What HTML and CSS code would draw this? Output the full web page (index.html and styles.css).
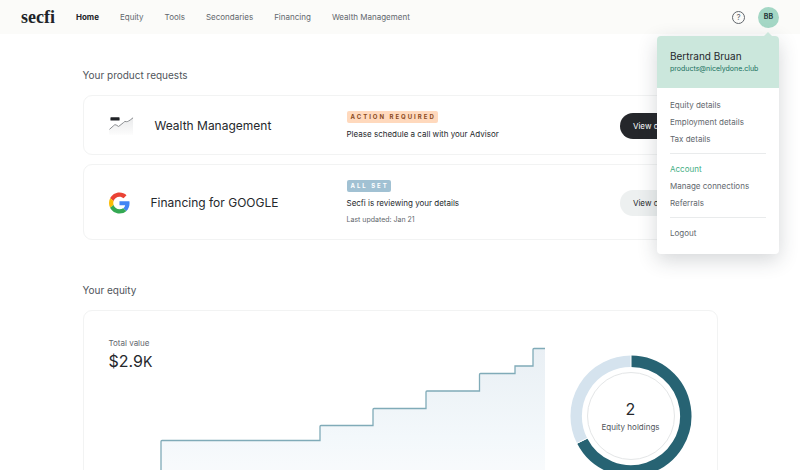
FILE: index.html
```html
<!DOCTYPE html>
<html lang="en">
<head>
<meta charset="utf-8">
<meta name="viewport" content="width=device-width, initial-scale=1">
<title>Secfi</title>
<link rel="stylesheet" href="styles.css">
</head>
<body>
<header class="topbar">
  <a class="logo" href="#">secfi</a>
  <nav class="nav">
    <a class="current" href="#">Home</a>
    <a href="#">Equity</a>
    <a href="#">Tools</a>
    <a href="#">Secondaries</a>
    <a href="#">Financing</a>
    <a href="#">Wealth Management</a>
  </nav>
  <div class="tools">
    <button class="help" type="button">?</button>
    <div class="account">
      <button class="avatar" type="button">BB</button>
      <div class="menu">
        <div class="menu-head">
          <p class="menu-name">Bertrand Bruan</p>
          <a class="menu-mail" href="#">products@nicelydone.club</a>
        </div>
        <div class="menu-body">
          <div class="menu-group">
            <a href="#">Equity details</a>
            <a href="#">Employment details</a>
            <a href="#">Tax details</a>
          </div>
          <div class="menu-group">
            <a class="active" href="#">Account</a>
            <a href="#">Manage connections</a>
            <a href="#">Referrals</a>
          </div>
          <div class="menu-group">
            <a href="#">Logout</a>
          </div>
        </div>
      </div>
    </div>
  </div>
</header>
<main class="page">
  <section class="section">
    <h2>Your product requests</h2>
    <div class="requests">
      <article class="card request">
        <div class="product">
          <svg width="25" height="20" viewBox="0 0 26 20" aria-hidden="true">
            <defs><linearGradient id="spark" x1="0" y1="0" x2="0" y2="1"><stop offset="0" stop-color="#e9eaeb"/><stop offset="1" stop-color="#fcfcfc"/></linearGradient></defs>
            <path d="M0 14 5 9.500 8 9 10 10.500 15 6.500 17 5 20 5.500 25 1V19H0Z" fill="url(#spark)"/>
            <path d="M.5 13.500 5 9.500Q6 8 7.500 9L10 10.500 15 6.500Q16.500 4.500 18 5.500 19.500 6 25 1.500" fill="none" stroke="#85888b"/>
            <rect x="1.500" y="1" width="9.500" height="3.400" rx=".6" fill="#202226"/>
          </svg>
          <h3>Wealth Management</h3>
        </div>
        <div class="status">
          <span class="badge badge-action">ACTION REQUIRED</span>
          <p class="message">Please schedule a call with your Advisor</p>
        </div>
        <button class="btn btn-dark" type="button">View details</button>
      </article>
      <article class="card request">
        <div class="product">
          <svg width="21" height="22" viewBox="0 0 48 48" aria-hidden="true">
            <path fill="#EA4335" d="M24 9.500c3.540 0 6.710 1.220 9.210 3.600l6.850-6.850C35.900 2.380 30.470 0 24 0 14.620 0 6.510 5.380 2.560 13.220l7.980 6.190C12.430 13.720 17.740 9.500 24 9.500z"/>
            <path fill="#4285F4" d="M46.980 24.550c0-1.570-.15-3.090-.38-4.550H24v9.020h12.940c-.58 2.960-2.260 5.480-4.780 7.180l7.730 6c4.510-4.180 7.090-10.360 7.090-17.650z"/>
            <path fill="#FBBC05" d="M10.530 28.590c-.48-1.450-.76-2.990-.76-4.590s.27-3.140.76-4.590l-7.980-6.190C.92 16.460 0 20.120 0 24s.92 7.540 2.560 10.780l7.970-6.190z"/>
            <path fill="#34A853" d="M24 48c6.480 0 11.930-2.130 15.890-5.810l-7.730-6c-2.150 1.450-4.920 2.300-8.160 2.300-6.260 0-11.570-4.220-13.470-9.910l-7.980 6.190C6.510 42.620 14.620 48 24 48z"/>
          </svg>
          <h3>Financing for GOOGLE</h3>
        </div>
        <div class="status">
          <span class="badge badge-set">ALL SET</span>
          <p class="message">Secfi is reviewing your details</p>
          <p class="updated">Last updated: Jan 21</p>
        </div>
        <button class="btn btn-light" type="button">View details</button>
      </article>
    </div>
  </section>
  <section class="section">
    <h2>Your equity</h2>
    <div class="card equity">
      <div class="value">
        <div class="total">
          <p class="total-label">Total value</p>
          <p class="total-amount">$2.9<span>K</span></p>
        </div>
        <svg class="steps" viewBox="0 0 436 160" aria-hidden="true">
          <defs><linearGradient id="area" x1="0" y1="0" x2="0" y2="1"><stop offset="0" stop-color="#e9eff4"/><stop offset=".6" stop-color="#f3f8fb"/><stop offset="1" stop-color="#fcfcfd"/></linearGradient></defs>
          <path d="M52 160V104.500H211V89.500H264V72.500H317V55H370.500V37.500H406V30H424V12.500H436V160Z" fill="url(#area)"/>
          <path d="M52 160V105.500Q52 104.500 53 104.500H211V90.500Q211 89.500 212 89.500H264V73.500Q264 72.500 265 72.500H317V56Q317 55 318 55H370.500V38.500Q370.500 37.500 371.500 37.500H406V30H424V13.500Q424 12.500 425 12.500H436" fill="none" stroke="#80abb8" stroke-width="1.300"/>
        </svg>
      </div>
      <div class="holdings">
        <svg class="ring" viewBox="0 0 122 122" aria-hidden="true">
          <path d="M61 6.200A54.800 54.800 0 1 1 12.200 86" fill="none" stroke="#276373" stroke-width="11.400"/>
          <path d="M61 6.200A54.800 54.800 0 0 0 12.200 86" fill="none" stroke="#d5e3ee" stroke-width="11.400"/>
          <path d="M61 0V13M6 88.800 18.500 82.700" stroke="#fff" stroke-width="1"/>
          <circle cx="61" cy="61" r="43.500" fill="none" stroke="#e4e6e7"/>
        </svg>
        <div class="holdings-text">
          <p class="count">2</p>
          <p class="count-label">Equity holdings</p>
        </div>
      </div>
    </div>
  </section>
</main>
</body>
</html>
```
FILE: styles.css
```css
* { box-sizing: border-box; }
body {
  margin: 0;
  background: #fff;
  color: #25282c;
  font-family: Inter, "Liberation Sans", sans-serif;
  font-size: 8px;
  line-height: 14px;
}
h2, h3, p { margin: 0; font-weight: 400; }
a { color: inherit; text-decoration: none; }
button { font: inherit; border: 0; padding: 0; }

.topbar {
  display: flex;
  align-items: center;
  height: 34px;
  padding: 0 21px;
  background: #fbfbf9;
}
.logo {
  font: bold 18px/32px "Liberation Serif", serif;
  color: #202328;
}
.nav {
  display: flex;
  gap: 21px;
  margin-left: 21px;
  color: #62676d;
}
.nav .current { color: #202328; font-weight: 700; }
.tools {
  display: flex;
  align-items: center;
  gap: 13px;
  margin-left: auto;
}
.help {
  width: 13px;
  height: 13px;
  border: 1px solid #62676d;
  border-radius: 50%;
  background: none;
  color: #62676d;
  line-height: 11px;
}
.account { position: relative; }
.avatar {
  display: block;
  width: 21px;
  height: 21px;
  border-radius: 50%;
  background: #a4d7c5;
  color: #25383a;
  font-size: 7px;
  font-weight: 700;
}

.menu {
  position: absolute;
  z-index: 2;
  top: 29px;
  right: 0;
  width: 122px;
  border-radius: 4px;
  background: #fff;
  box-shadow: 0 6px 20px rgba(40, 50, 60, .2);
}
.menu::before {
  content: "";
  position: absolute;
  top: -4px;
  right: 6px;
  border: 5px solid transparent;
  border-top: 0;
  border-bottom-color: #cbe7dc;
}
.menu-head {
  padding: 13px;
  border-radius: 4px 4px 0 0;
  background: #cbe7dc;
}
.menu-name { font-size: 10px; }
.menu-mail {
  display: block;
  color: #18705c;
  font-size: 7px;
  line-height: 12px;
}
.menu-body { padding: 0 13px 7px; }
.menu-group {
  display: grid;
  padding: 9px 0 5px;
  color: #62676d;
  line-height: 17px;
}
.menu-group + .menu-group { border-top: 1px solid #e9ebec; padding-top: 7px; }
.menu-group .active { color: #43ad83; }

.page {
  max-width: 635px;
  margin: 0 auto;
  padding: 32px 0;
}
.section + .section { margin-top: 41px; }
h2 {
  margin-bottom: 11px;
  color: #50555b;
  font-size: 10px;
  line-height: 18px;
}
.card {
  border: 1px solid #f2f3f3;
  border-radius: 9px;
}
.requests { display: grid; gap: 9px; }
.request {
  display: grid;
  grid-template-columns: 238px 1fr auto;
  align-items: center;
  padding: 15px 25px 13px;
}
.product {
  display: flex;
  align-items: center;
  gap: 21px;
}
h3 { font-size: 12px; line-height: 18px; }
.status {
  display: grid;
  justify-items: start;
}
.badge {
  margin-bottom: 4px;
  padding: 0 2px 0 4px;
  border-radius: 2px;
  font-size: 6px;
  font-weight: 700;
  line-height: 12px;
  letter-spacing: 2px;
}
.badge-action { background: #ffd9bd; color: #8a4a1e; }
.badge-set { background: #a1c1d3; color: #fff; }
.updated {
  margin-top: 4px;
  color: #62676d;
  font-size: 7px;
  line-height: 12px;
}
.btn {
  padding: 0 13px;
  border-radius: 13px;
  line-height: 26px;
}
.btn-dark { background: #25272b; color: #fff; }
.btn-light { background: #edf0f0; color: #25282c; }

.equity {
  display: grid;
  grid-template-columns: 1fr 122px;
  gap: 25px;
  padding: 25px;
}
.value { display: grid; }
.total, .steps { grid-area: 1 / 1; }
.total-label { color: #62676d; }
.total-amount { font-size: 16px; line-height: 22px; }
.total-amount span { font-size: 14px; }
.steps { width: 100%; }
.holdings {
  display: grid;
  place-items: center;
  align-self: center;
}
.ring, .holdings-text { grid-area: 1 / 1; }
.ring { width: 100%; }
.holdings-text { text-align: center; }
.count { font-size: 16px; line-height: 22px; }
.count-label { color: #50555b; }
```
